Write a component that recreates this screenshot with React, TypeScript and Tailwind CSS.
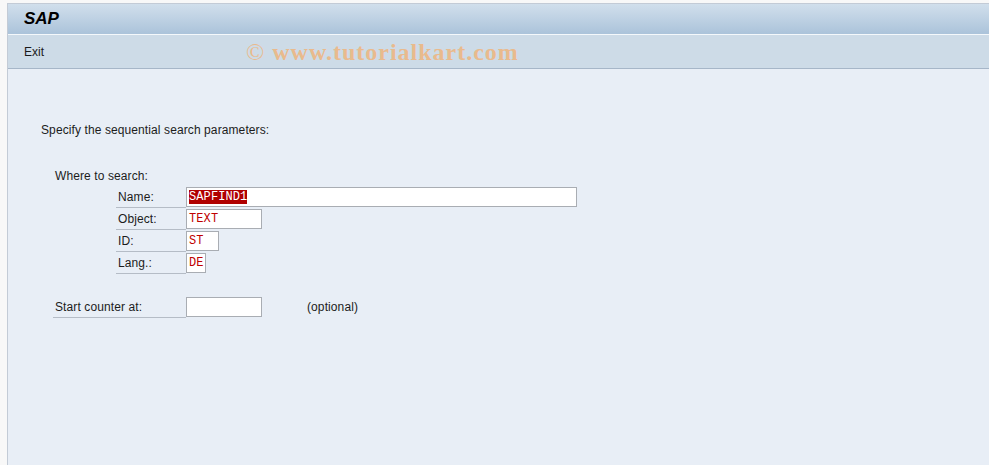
import React from "react";

const font = { fontFamily: '"Liberation Sans", Arial, sans-serif' };

function Row({ label, value, w, selected }: { label: string; value: string; w: string; selected?: boolean }) {
  return (
    <div className="flex h-[22px] items-start">
      <div className="w-[70px] h-[21px] border-b border-[#b5bcc6] pl-[2px] text-[12px] leading-[20px] text-[#1c1c1c] tracking-[0.1px]">{label}</div>
      <div className={`${w} h-[20px] bg-white border border-[#a9adb3] px-[2px] flex items-center`}>
        <span
          className={`text-[12px] leading-[14px] ${selected ? "bg-[#b00000] text-white" : "text-[#c00000]"}`}
          style={{ fontFamily: '"Liberation Mono", "Courier New", monospace' }}
        >
          {value}
        </span>
      </div>
    </div>
  );
}

export default function App() {
  return (
    <div className="w-[989px] h-[465px] bg-[#f8f8f8] flex overflow-hidden" style={font}>
      <div className="w-[7px] shrink-0" />
      <div className="flex-1 flex flex-col mt-[3px] border-l border-t border-[#c3cbd6]">
        <div className="h-[31px] bg-gradient-to-b from-[#d1dfec] to-[#abc3da] border-b border-[#f4f8fb] flex items-center pl-[16px]">
          <span className="text-[17px] font-bold italic text-black" style={{ fontFamily: '"Liberation Sans", Arial, sans-serif' }}>SAP</span>
        </div>
        <div className="h-[34px] bg-[#cddbe7] border-b border-[#a6b6c8] flex items-center relative">
          <span className="pl-[16px] text-[12px] text-[#1a1a1a]">Exit</span>
          <span
            className="absolute left-[238px] top-[3px] text-[24px] leading-[28px] font-bold text-[#e9ba8d] tracking-[1px]"
            style={{ fontFamily: '"Liberation Serif", "Times New Roman", serif' }}
          >
            <span className="font-normal">©</span> www.tutorialkart.com
          </span>
        </div>
        <div className="flex-1 bg-[#e8eef6] pt-[53px] pl-[33px] text-[12px] text-[#1c1c1c] tracking-[0.1px]">
          <div className="leading-[16px]">Specify the sequential search parameters:</div>
          <div className="pl-[14px] mt-[30px] leading-[16px]">Where to search:</div>
          <div className="pl-[75px] mt-[3px]">
            <Row label="Name:" value="SAPFIND1" w="w-[391px]" selected />
            <Row label="Object:" value="TEXT" w="w-[76px]" />
            <Row label="ID:" value="ST" w="w-[33px]" />
            <Row label="Lang.:" value="DE" w="w-[20px]" />
          </div>
          <div className="flex items-start pl-[12px] mt-[22px] h-[22px]">
            <div className="w-[133px] h-[21px] border-b border-[#b5bcc6] pl-[2px] leading-[20px]">Start counter at:</div>
            <div className="w-[76px] h-[20px] bg-white border border-[#a9adb3]" />
            <div className="ml-[45px] leading-[20px]">(optional)</div>
          </div>
        </div>
      </div>
    </div>
  );
}
